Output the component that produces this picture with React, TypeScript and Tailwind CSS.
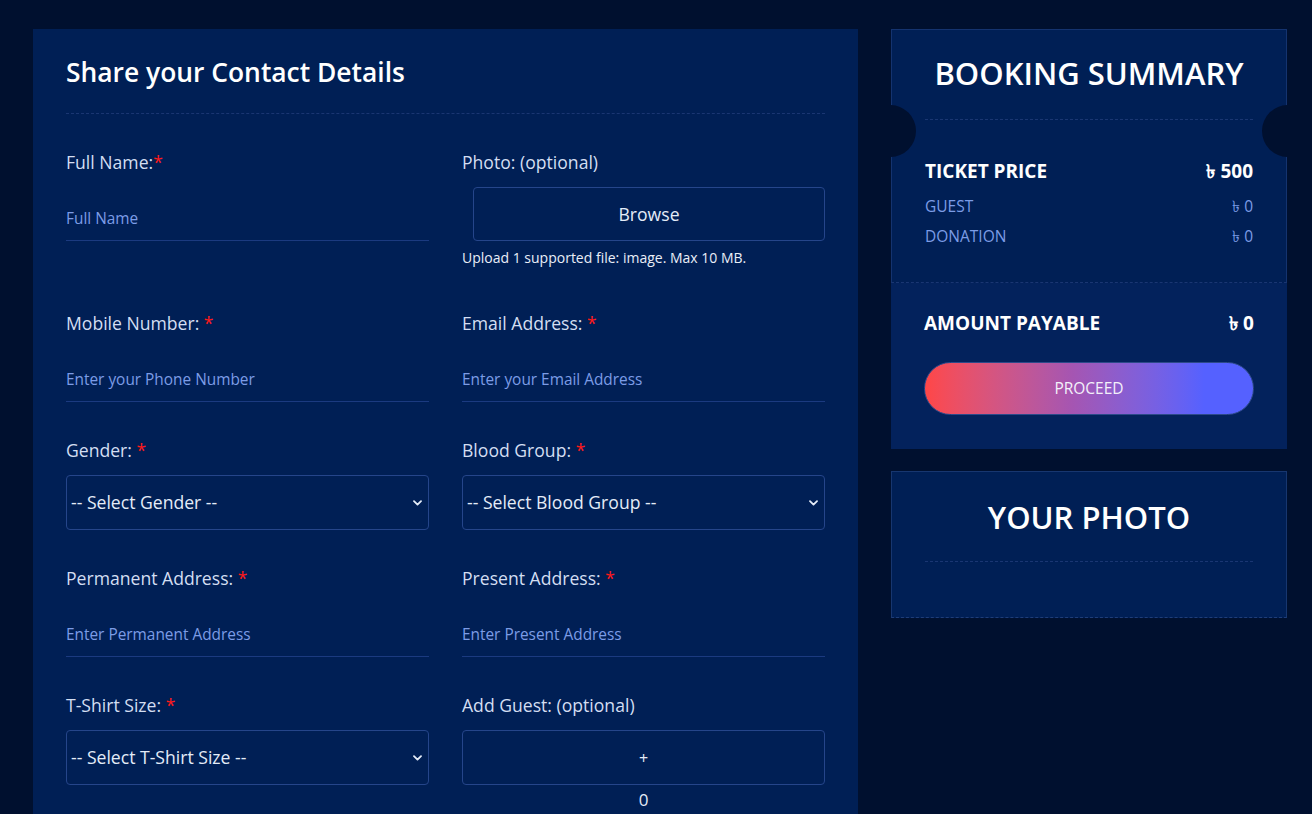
import React from 'react'

const font = { fontFamily: '"Open Sans", "Noto Sans", sans-serif' }

function Label({ text, required, optional, tight }: { text: string; required?: boolean; optional?: boolean; tight?: boolean }) {
  return (
    <div className="h-[24px] mb-[13px] text-[17.6px] leading-[24px] text-[#d3def2]">
      {text}
      {optional && ' (optional)'}
      {required && <span className="text-[#ff1a1a]">{tight ? '*' : ' *'}</span>}
    </div>
  )
}

function TextField({ label, placeholder, tight }: { label: string; placeholder: string; tight?: boolean }) {
  return (
    <div>
      <Label text={label} required tight={tight} />
      <input
        placeholder={placeholder}
        className="block w-full h-[54px] pt-[10px] bg-transparent border-b border-[#1b3a80] text-[15.4px] text-white placeholder:text-[#7c9ce6] outline-none"
      />
    </div>
  )
}

function SelectField({ label, text }: { label: string; text: string }) {
  return (
    <div>
      <Label text={label} required />
      <div className="relative">
        <select className="block w-full h-[55px] appearance-none bg-transparent border border-[#25458a] rounded-[4px] pl-[4px] pr-8 text-[17.6px] text-[#e4ecf8] outline-none">
          <option className="bg-[#001f55]">{text}</option>
        </select>
        <svg
          className="pointer-events-none absolute right-[7px] top-1/2 -translate-y-1/2"
          width="9"
          height="6"
          viewBox="0 0 9 6"
          fill="none"
          stroke="#e4ecf8"
          strokeWidth="1.8"
          strokeLinecap="round"
          strokeLinejoin="round"
        >
          <path d="M1 1.2l3.5 3.4L8 1.2" />
        </svg>
      </div>
    </div>
  )
}

function Dash() {
  return <div className="border-t border-dashed border-[#1a3672]" />
}

function Notch({ side }: { side: 'left' | 'right' }) {
  return (
    <div
      className={
        side === 'left'
          ? 'absolute left-[-27px] top-[76px] w-[52px] h-[52px] rounded-full bg-[#00102f]'
          : 'absolute right-[-27px] top-[76px] w-[52px] h-[52px] rounded-full bg-[#00102f]'
      }
    />
  )
}

export default function App() {
  return (
    <div className="min-h-screen bg-[#00102f] pl-[33px] pt-[29px] flex gap-[33px] items-start" style={font}>
      <div className="w-[825px] bg-[#001f55] px-[33px] pt-[26px] pb-[40px]">
        <h2 className="text-[26.4px] leading-[34px] font-semibold text-white">Share your Contact Details</h2>
        <div className="mt-[24px] mb-[36px]">
          <Dash />
        </div>

        <div className="grid grid-cols-2 gap-x-[33px] gap-y-[36px] items-start">
          <TextField label="Full Name:" placeholder="Full Name" tight />
          <div>
            <Label text="Photo:" optional />
            <div className="ml-[11px] h-[54px] border border-[#25458a] rounded-[4px] flex items-center justify-center text-[17.6px] text-[#e4ecf8]">
              Browse
            </div>
            <div className="mt-[8px] mb-[8px] text-[14px] leading-[18px] text-[#e9eef8]">
              Upload 1 supported file: image. Max 10 MB.
            </div>
          </div>

          <TextField label="Mobile Number:" placeholder="Enter your Phone Number" />
          <TextField label="Email Address:" placeholder="Enter your Email Address" />

          <SelectField label="Gender:" text="-- Select Gender --" />
          <SelectField label="Blood Group:" text="-- Select Blood Group --" />

          <TextField label="Permanent Address:" placeholder="Enter Permanent Address" />
          <TextField label="Present Address:" placeholder="Enter Present Address" />

          <SelectField label="T-Shirt Size:" text="-- Select T-Shirt Size --" />
          <div>
            <Label text="Add Guest:" optional />
            <div className="h-[55px] border border-[#25458a] rounded-[4px] flex items-center justify-center text-[16px] text-[#e4ecf8]">
              +
            </div>
            <div className="mt-[5px] text-center text-[17px] leading-[20px] text-[#e4ecf8]">0</div>
          </div>
        </div>
      </div>

      <div className="w-[396px] flex flex-col gap-[22px]">
        <div className="relative overflow-hidden">
          <div className="bg-[#001f55] border-x border-t border-[#14336f] px-[33px] pt-[23px] pb-[36px] border-b border-b-[#1a3672] [border-bottom-style:dashed]">
            <h3 className="text-center text-[31px] leading-[40px] font-semibold text-white">BOOKING SUMMARY</h3>
            <div className="mt-[26px] mb-[38px]">
              <Dash />
            </div>
            <div className="flex justify-between h-[26px] items-center text-[19px] font-bold text-white">
              <span>TICKET PRICE</span>
              <span>৳ 500</span>
            </div>
            <div className="mt-[13px] flex justify-between h-[20px] items-center text-[15.5px] text-[#7c9ce6]">
              <span>GUEST</span>
              <span>৳ 0</span>
            </div>
            <div className="mt-[10px] mb-[-1px] flex justify-between h-[20px] items-center text-[15.5px] text-[#7c9ce6]">
              <span>DONATION</span>
              <span>৳ 0</span>
            </div>
          </div>
          <div className="bg-[#03225c] px-[33px] pt-[27px] pb-[34px]">
            <div className="flex justify-between h-[26px] items-center text-[19px] font-bold text-white">
              <span>AMOUNT PAYABLE</span>
              <span>৳ 0</span>
            </div>
            <button className="mt-[26px] w-full h-[53px] rounded-full bg-linear-to-r from-[#ff4646] via-[#a555b2] via-45% to-[#5561ff] to-85% border border-[#2d4a8a] text-[15.5px] text-[#f3f0fa]">
              PROCEED
            </button>
          </div>
          <Notch side="left" />
          <Notch side="right" />
        </div>

        <div className="bg-[#001f55] border border-[#17366f] border-b-[#1f3d78] [border-bottom-style:dashed] px-[33px] pt-[25px] pb-[55px]">
          <h3 className="text-center text-[31px] leading-[40px] font-semibold text-white">YOUR PHOTO</h3>
          <div className="mt-[24px]">
            <Dash />
          </div>
        </div>
      </div>
    </div>
  )
}
